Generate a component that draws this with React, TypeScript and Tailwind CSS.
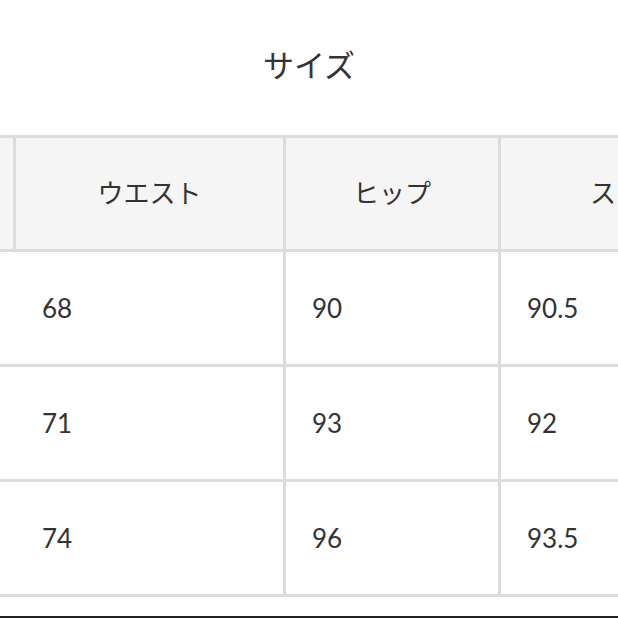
import React from 'react'

const headers = ['サイズ', 'ウエスト', 'ヒップ', 'スカート丈']

const rows = [
  ['S', '68', '90', '90.5'],
  ['M', '71', '93', '92'],
  ['L', '74', '96', '93.5']
]

export default function App() {
  return (
    <div className="w-[618px] h-[618px] bg-white overflow-hidden text-[#333]" style={{ fontFamily: 'Lato, "Noto Sans CJK JP", sans-serif' }}>
      <div className="h-[135px] flex items-center justify-center pb-[5px]">
        <h2 className="text-[31px] leading-none">サイズ</h2>
      </div>
      <div className="grid w-max grid-cols-[13px_267px_212px_308px] grid-rows-[111px_112px_112px_112px] gap-[3px] py-[3px] bg-[#dcdcdc]">
        {headers.map((h, i) => (
          <div key={h} className="bg-[#f5f5f5] flex items-center justify-center text-[26px] overflow-hidden whitespace-nowrap">
            {i === 0 ? '' : h}
          </div>
        ))}
        {rows.map((r) =>
          r.map((c, i) => (
            <div key={r[0] + i} className="bg-white flex items-center pl-[26px] text-[26px] overflow-hidden whitespace-nowrap">
              {i === 0 ? '' : c}
            </div>
          ))
        )}
      </div>
      <div className="h-[21px] border-b-2 border-[#222]"></div>
    </div>
  )
}
